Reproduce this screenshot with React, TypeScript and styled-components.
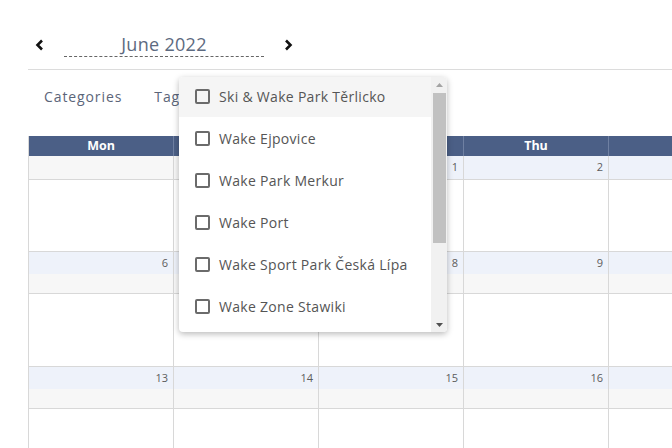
import React from "react";
import styled, { createGlobalStyle } from "styled-components";

const GlobalStyle = createGlobalStyle`
  html, body { margin: 0; padding: 0; background: #fff; }
  body { font-family: "Open Sans", "Noto Sans", sans-serif; }
  * { box-sizing: border-box; }
`;

const Page = styled.div`
  width: 672px;
  height: 448px;
  overflow: hidden;
  position: relative;
  padding-left: 28px;
`;

const Header = styled.div`
  height: 70px;
  display: flex;
  align-items: center;
  padding-top: 20px;
  border-bottom: 1px solid #dcdcdc;
`;

const NavButton = styled.button<{ $ml: number }>`
  width: 20px;
  height: 20px;
  border: none;
  background: none;
  padding: 0;
  display: flex;
  align-items: center;
  justify-content: center;
  margin-left: ${(p) => p.$ml}px;
`;

const MonthTitle = styled.div`
  width: 200px;
  margin-left: 14px;
  text-align: center;
  font-size: 18px;
  letter-spacing: 0.3px;
  color: #5d6a80;
  border-bottom: 1px dashed #666;
  line-height: 22px;
  padding-bottom: 1px;
`;

const Tabs = styled.div`
  height: 66px;
  display: flex;
  align-items: flex-start;
  padding-top: 17px;
  padding-left: 16px;
  gap: 32px;
`;

const Tab = styled.div`
  font-size: 14px;
  letter-spacing: 0.9px;
  color: #5b6579;
`;

const Grid = styled.div`
  display: grid;
  grid-template-columns: repeat(7, 145px);
  border-left: 1px solid #d8d8d8;
`;

const DayHead = styled.div`
  height: 20px;
  background: #4b5f86;
  color: #fff;
  font-weight: 700;
  font-size: 12.5px;
  text-align: center;
  line-height: 20px;
  border-right: 1px solid #6f80a2;
`;

const Cell = styled.div`
  border-right: 1px solid #d8d8d8;
  border-bottom: 1px solid #d8d8d8;
  display: flex;
  flex-direction: column;
`;

const DayBar = styled.div<{ $in: boolean; $h: number }>`
  height: ${(p) => p.$h}px;
  background: ${(p) => (p.$in ? "#eef2fa" : "#f7f7f7")};
  text-align: right;
  padding-right: 5px;
  font-size: 11px;
  color: #5c5c5c;
  line-height: 22px;
`;

const AllDay = styled.div`
  height: 19px;
  background: #f7f7f7;
`;

const Body = styled.div<{ $h: number }>`
  height: ${(p) => p.$h}px;
  border-top: 1px solid #d8d8d8;
  background: #fff;
`;

const Dropdown = styled.div`
  position: absolute;
  left: 179px;
  top: 77px;
  width: 268px;
  height: 255px;
  background: #fff;
  border-radius: 4px;
  box-shadow: 0 2px 6px rgba(0, 0, 0, 0.28);
  display: flex;
  overflow: hidden;
`;

const List = styled.div`
  flex: 1;
  overflow: hidden;
  margin-top: -2px;
`;

const Item = styled.div<{ $active?: boolean }>`
  height: 42px;
  display: flex;
  align-items: center;
  padding-left: 16px;
  background: ${(p) => (p.$active ? "#f5f5f5" : "#fff")};
  font-size: 14px;
  letter-spacing: 0.3px;
  color: #555;
  white-space: nowrap;
`;

const Check = styled.span`
  width: 15px;
  height: 15px;
  border: 2px solid #6b6b6b;
  border-radius: 2px;
  margin-right: 9px;
  flex: none;
`;

const ScrollTrack = styled.div`
  width: 16px;
  background: #f1f1f1;
  display: flex;
  flex-direction: column;
  align-items: center;
`;

const ScrollArrow = styled.div`
  height: 15px;
  display: flex;
  align-items: center;
  justify-content: center;
`;

const Thumb = styled.div`
  width: 13px;
  height: 150px;
  background: #c1c1c1;
  margin-top: 1px;
`;

const Spacer = styled.div`
  flex: 1;
`;

const Chevron = ({ dir }: { dir: "left" | "right" }) => (
  <svg width="10" height="12" viewBox="0 0 10 12">
    <path
      d={dir === "left" ? "M7 1.5 L2.5 6 L7 10.5" : "M3 1.5 L7.5 6 L3 10.5"}
      fill="none"
      stroke="#111"
      strokeWidth="2.6"
    />
  </svg>
);

const days = ["Mon", "Tue", "Wed", "Thu", "Fri", "Sat", "Sun"];
const weeks: { n: number; inMonth: boolean }[][] = [
  [30, 31, 1, 2, 3, 4, 5].map((n, i) => ({ n, inMonth: i >= 2 })),
  [6, 7, 8, 9, 10, 11, 12].map((n) => ({ n, inMonth: true })),
  [13, 14, 15, 16, 17, 18, 19].map((n) => ({ n, inMonth: true })),
];

const items = [
  "Ski & Wake Park Těrlicko",
  "Wake Ejpovice",
  "Wake Park Merkur",
  "Wake Port",
  "Wake Sport Park Česká Lípa",
  "Wake Zone Stawiki",
];

export default function App() {
  return (
    <>
      <GlobalStyle />
      <Page>
        <Header>
          <NavButton $ml={2}>
            <Chevron dir="left" />
          </NavButton>
          <MonthTitle>June 2022</MonthTitle>
          <NavButton $ml={14}>
            <Chevron dir="right" />
          </NavButton>
        </Header>
        <Tabs>
          <Tab>Categories</Tab>
          <Tab>Tags</Tab>
        </Tabs>
        <Grid>
          {days.map((d) => (
            <DayHead key={d}>{d}</DayHead>
          ))}
          {weeks.map((w, wi) =>
            w.map((c, ci) => (
              <Cell key={`${wi}-${ci}`}>
                <DayBar $in={c.inMonth} $h={wi === 0 ? 23 : 22}>
                  {c.inMonth ? c.n : ""}
                </DayBar>
                {wi > 0 && <AllDay />}
                <Body $h={wi === 0 ? 72 : 73} />
              </Cell>
            ))
          )}
        </Grid>
        <Dropdown>
          <List>
            {items.map((t, i) => (
              <Item key={t} $active={i === 0}>
                <Check />
                {t}
              </Item>
            ))}
          </List>
          <ScrollTrack>
            <ScrollArrow>
              <svg width="7" height="4" viewBox="0 0 7 4">
                <path d="M0 4 L3.5 0 L7 4 Z" fill="#a3a3a3" />
              </svg>
            </ScrollArrow>
            <Thumb />
            <Spacer />
            <ScrollArrow>
              <svg width="7" height="4" viewBox="0 0 7 4">
                <path d="M0 0 L3.5 4 L7 0 Z" fill="#505050" />
              </svg>
            </ScrollArrow>
          </ScrollTrack>
        </Dropdown>
      </Page>
    </>
  );
}
